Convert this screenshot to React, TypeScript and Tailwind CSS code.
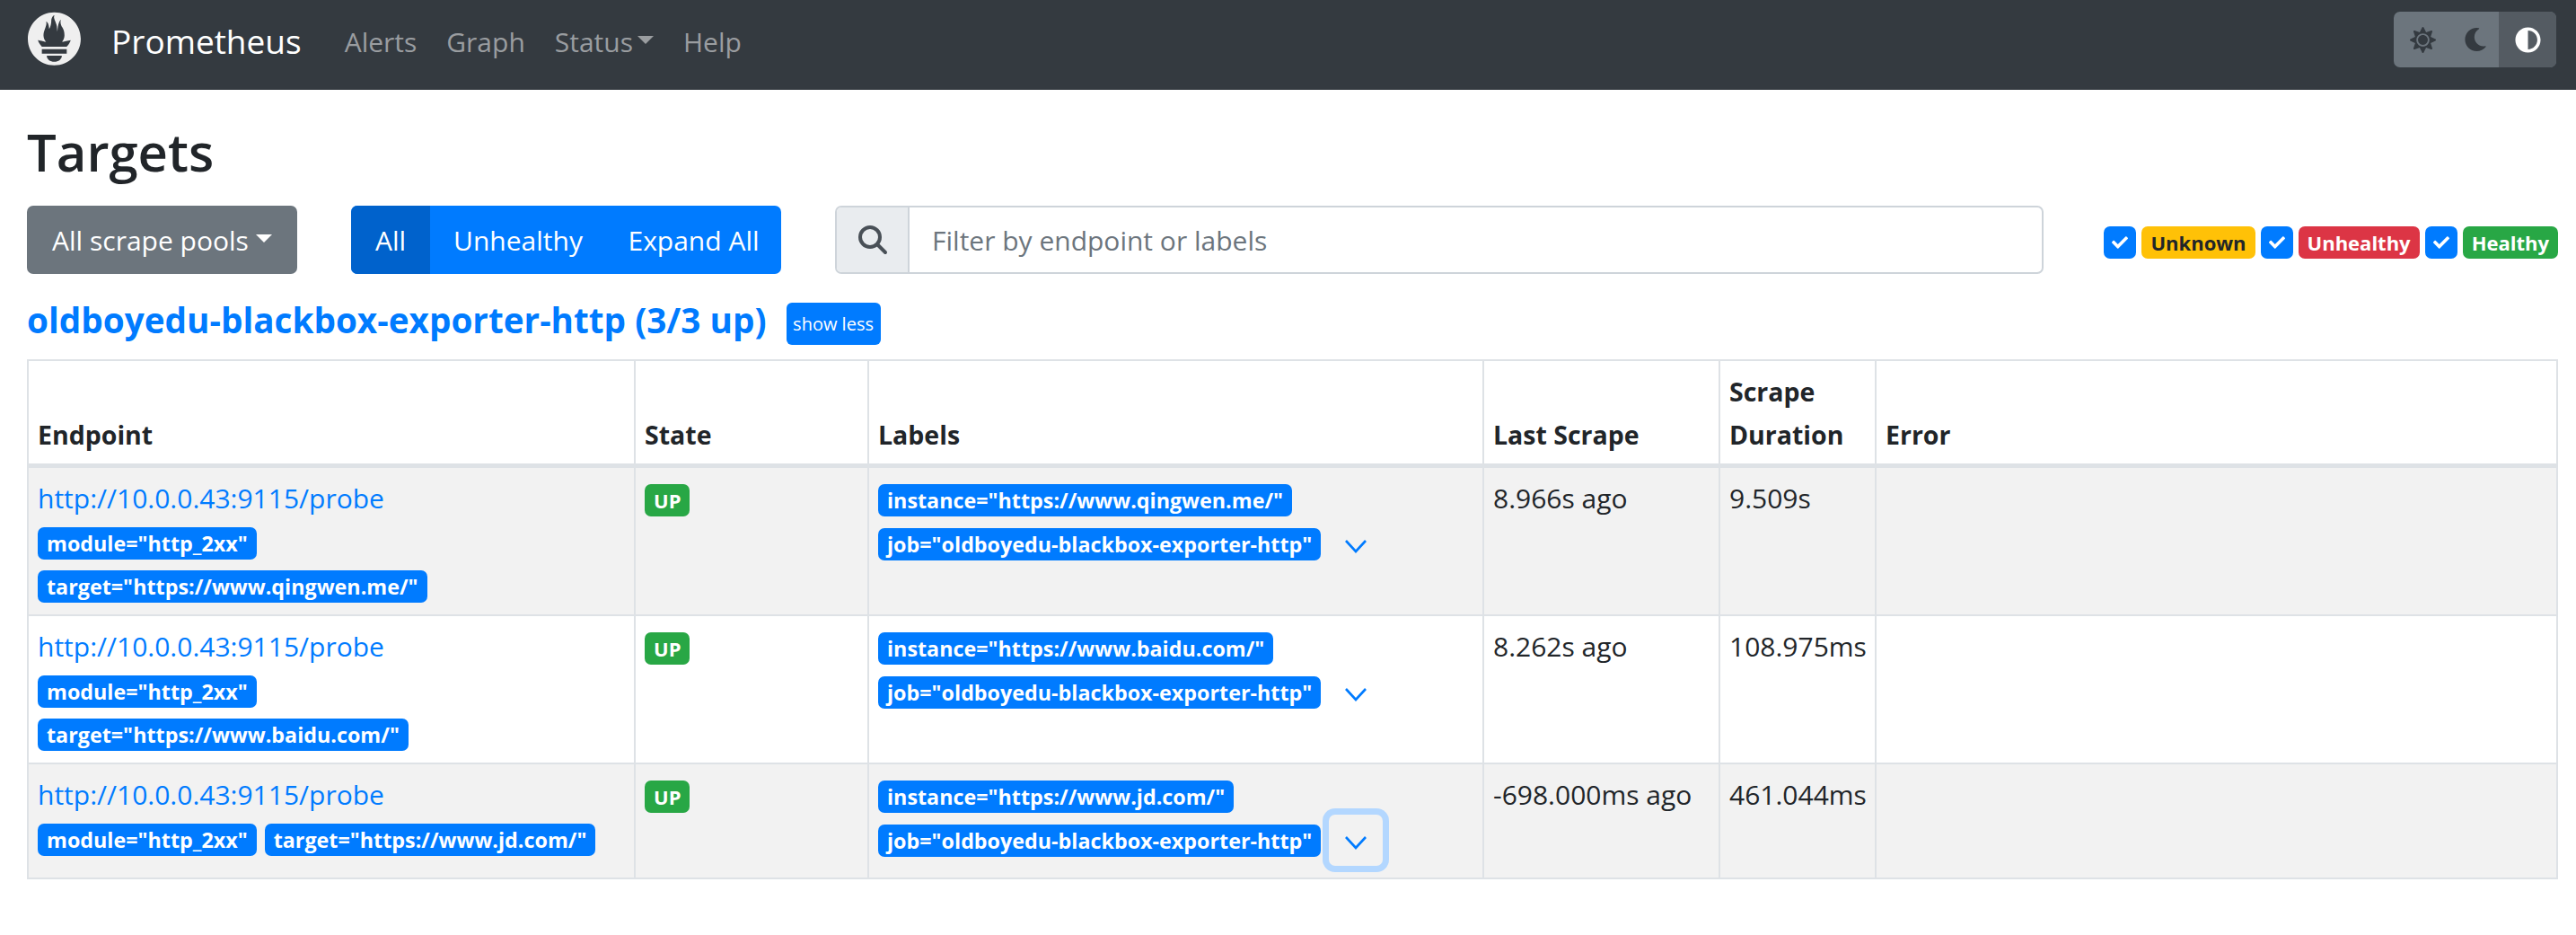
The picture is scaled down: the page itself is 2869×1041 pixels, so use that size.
import React from "react";
import { FaAdjust, FaCheck, FaMoon, FaSun } from "react-icons/fa";

const LOGO =
  "M56.667.667C25.372.667 0 26.036 0 57.332c0 31.295 25.372 56.666 56.667 56.666s56.666-25.371 56.666-56.666C113.333 26.036 87.961.667 56.667.667zm0 106.055c-8.904 0-16.123-5.948-16.123-13.283H72.79c0 7.335-7.219 13.283-16.123 13.283zM83.297 89.04H30.034v-9.658h53.264v9.658zm-.191-14.629H30.186c-.176-.203-.356-.403-.526-.609-5.452-6.62-6.736-10.076-7.983-13.598-.021-.116 6.611 1.355 11.314 2.413 0 0 2.42.56 5.958 1.205-3.397-3.982-5.414-9.044-5.414-14.218 0-11.359 8.712-21.285 5.569-29.308 3.059.249 6.331 6.456 6.552 16.161 3.252-4.494 4.613-12.701 4.613-17.733 0-5.21 3.433-11.262 6.867-11.469-3.061 5.045.793 9.37 4.219 20.099 1.285 4.03 1.121 10.812 2.113 15.113.329-8.933 1.865-21.967 7.532-26.467-2.5 5.667.37 12.758 2.333 16.167 3.167 5.5 5.087 9.667 5.087 17.548 0 5.284-1.951 10.259-5.242 14.148 3.742-.702 6.326-1.335 6.326-1.335l12.152-2.371c.001-.001-1.765 7.261-8.55 14.254z";

const rows = [
  {
    target: "https://www.qingwen.me/",
    scrape: "8.966s ago",
    duration: "9.509s",
  },
  {
    target: "https://www.baidu.com/",
    scrape: "8.262s ago",
    duration: "108.975ms",
  },
  {
    target: "https://www.jd.com/",
    scrape: "-698.000ms ago",
    duration: "461.044ms",
    focused: true,
  },
];

const Badge: React.FC<{ children: React.ReactNode; className?: string }> = ({
  children,
  className = "bg-[#007bff] text-white text-[23.3px]",
}) => (
  <span className={`inline-block h-9 rounded-[7px] px-[10px] leading-9 font-bold whitespace-nowrap ${className}`}>
    {children}
  </span>
);

const Check: React.FC = () => (
  <span className="flex h-9 w-9 items-center justify-center rounded-[7px] bg-[#007bff] text-white">
    <FaCheck size={18} />
  </span>
);

const Chevron: React.FC<{ focused?: boolean }> = ({ focused }) => (
  <button
    className={`ml-[9px] inline-flex h-[57px] w-[60px] items-center justify-center rounded-[7px] pt-[4px] align-middle ${
      focused ? "ring-[7px] ring-[#b3d7ff]" : ""
    }`}
  >
    <svg width="26" height="16" viewBox="0 0 26 16" fill="none" stroke="#007bff" strokeWidth="2.6">
      <polyline points="2,2 13,14 24,2" />
    </svg>
  </button>
);

const Navbar: React.FC = () => (
  <nav className="flex h-[100px] items-center bg-[#343a40] pr-[22px] pl-[31px]">
    <svg width="60" height="60" viewBox="0 0 115.333 114" className="mb-[14px]">
      <path d={LOGO} fill="#efefef" />
    </svg>
    <span className="mb-[8px] ml-[33px] text-[37px] text-white">Prometheus</span>
    <div className="mb-[8px] ml-[48px] flex items-center gap-[33px] text-[30px] text-[#9a9da0]">
      <span>Alerts</span>
      <span>Graph</span>
      <span className="flex items-center gap-[5px]">
        Status
        <span className="mb-[4px] h-0 w-0 border-x-[9px] border-t-[9px] border-x-transparent border-t-[#9a9da0]" />
      </span>
      <span>Help</span>
    </div>
    <div className="mb-[12px] ml-auto flex h-[62px] w-[181px] overflow-hidden rounded-[7px] bg-[#6c757d]">
      <span className="flex w-[64px] items-center justify-center text-[#343a40]">
        <FaSun size={29} />
      </span>
      <span className="flex w-[53px] items-center justify-center text-[#343a40]">
        <FaMoon size={26} />
      </span>
      <span className="flex flex-1 items-center justify-center bg-[#545b62] text-white">
        <FaAdjust size={29} />
      </span>
    </div>
  </nav>
);

const Filters: React.FC = () => (
  <div className="flex items-center text-[30px]">
    <button className="flex h-[76px] w-[301px] items-center justify-center gap-[8px] rounded-[7px] bg-[#6c757d] text-white">
      All scrape pools
      <span className="mb-[4px] h-0 w-0 border-x-[9px] border-t-[9px] border-x-transparent border-t-white" />
    </button>
    <div className="ml-[60px] flex h-[76px] w-[479px] overflow-hidden rounded-[7px] bg-[#007bff] text-white">
      <button className="w-[88px] bg-[#0062cc]">All</button>
      <button className="w-[196px]">Unhealthy</button>
      <button className="flex-1">Expand All</button>
    </div>
    <div className="ml-[60px] flex h-[76px] w-[1346px] overflow-hidden rounded-[7px] border-2 border-[#ced4da]">
      <span className="flex w-[81px] items-center justify-center border-r-2 border-[#ced4da] bg-[#e9ecef]">
        <svg width="34" height="34" viewBox="0 0 34 34" fill="none" stroke="#495057" strokeWidth="4" strokeLinecap="round">
          <circle cx="14" cy="14" r="11" />
          <line x1="22.5" y1="22.5" x2="31" y2="31" />
        </svg>
      </span>
      <span className="flex flex-1 items-center pl-[25px] text-[#6c757d]">Filter by endpoint or labels</span>
    </div>
    <div className="mt-[6px] ml-auto flex items-center gap-[6px]">
      <Check />
      <Badge className="bg-[#ffc107] text-[22px] text-[#212529]">Unknown</Badge>
      <Check />
      <Badge className="bg-[#dc3545] text-[22px] text-white">Unhealthy</Badge>
      <Check />
      <Badge className="bg-[#28a745] text-[22px] text-white">Healthy</Badge>
    </div>
  </div>
);

export default function App() {
  const cell = "border-2 border-[#dee2e6] px-[10px] pt-[10px] pb-[8px] align-top";
  const head = "border-2 border-b-[5px] border-[#dee2e6] px-[10px] pt-[10px] pb-[8px] text-left align-bottom text-[28.5px] font-bold";
  return (
    <div className="min-h-screen bg-white text-[#212529] [font-family:'Open_Sans','Liberation_Sans',sans-serif]">
      <Navbar />
      <main className="pr-[20px] pl-[30px]">
        <h1 className="mt-[29px] h-[100px] text-[58px] leading-[80px] font-semibold">Targets</h1>
        <Filters />
        <div className="mt-[32px] mb-[16px] flex h-[47px] items-center">
          <span className="mb-[9px] text-[38.7px] font-bold text-[#007bff]">oldboyedu-blackbox-exporter-http (3/3 up)</span>
          <button className="ml-[22px] h-[47px] w-[105px] rounded-[6px] bg-[#007bff] text-[20px] text-white">
            show less
          </button>
        </div>
        <table className="w-full table-fixed border-collapse text-[30px] leading-[48px]">
          <colgroup>
            <col className="w-[676px]" />
            <col className="w-[260px]" />
            <col className="w-[685px]" />
            <col className="w-[263px]" />
            <col className="w-[174px]" />
            <col />
          </colgroup>
          <thead>
            <tr>
              <th className={head}>Endpoint</th>
              <th className={head}>State</th>
              <th className={head}>Labels</th>
              <th className={head}>Last Scrape</th>
              <th className={head}>Scrape Duration</th>
              <th className={head}>Error</th>
            </tr>
          </thead>
          <tbody>
            {rows.map((r, i) => (
              <tr key={r.target} className={i % 2 === 0 ? "bg-[#f2f2f2]" : "bg-white"}>
                <td className={cell}>
                  <a className="block text-[#007bff]">http://10.0.0.43:9115/probe</a>
                  <div
                    className={`flex gap-x-[9px] gap-y-[12px] pt-[8px] pb-[5px] ${
                      r.focused ? "flex-row" : "flex-col items-start"
                    }`}
                  >
                    <Badge>module="http_2xx"</Badge>
                    <Badge>target="{r.target}"</Badge>
                  </div>
                </td>
                <td className={cell}>
                  <div className="mt-[8px] flex">
                    <Badge className="bg-[#28a745] text-[22px] text-white">UP</Badge>
                  </div>
                </td>
                <td className={cell}>
                  <div className="mt-[8px] flex">
                    <Badge>instance="{r.target}"</Badge>
                  </div>
                  <div className="mt-[2px] flex items-center pb-[5px]">
                    <Badge>job="oldboyedu-blackbox-exporter-http"</Badge>
                    <Chevron focused={r.focused} />
                  </div>
                </td>
                <td className={cell}>{r.scrape}</td>
                <td className={cell}>{r.duration}</td>
                <td className={cell} />
              </tr>
            ))}
          </tbody>
        </table>
      </main>
    </div>
  );
}
